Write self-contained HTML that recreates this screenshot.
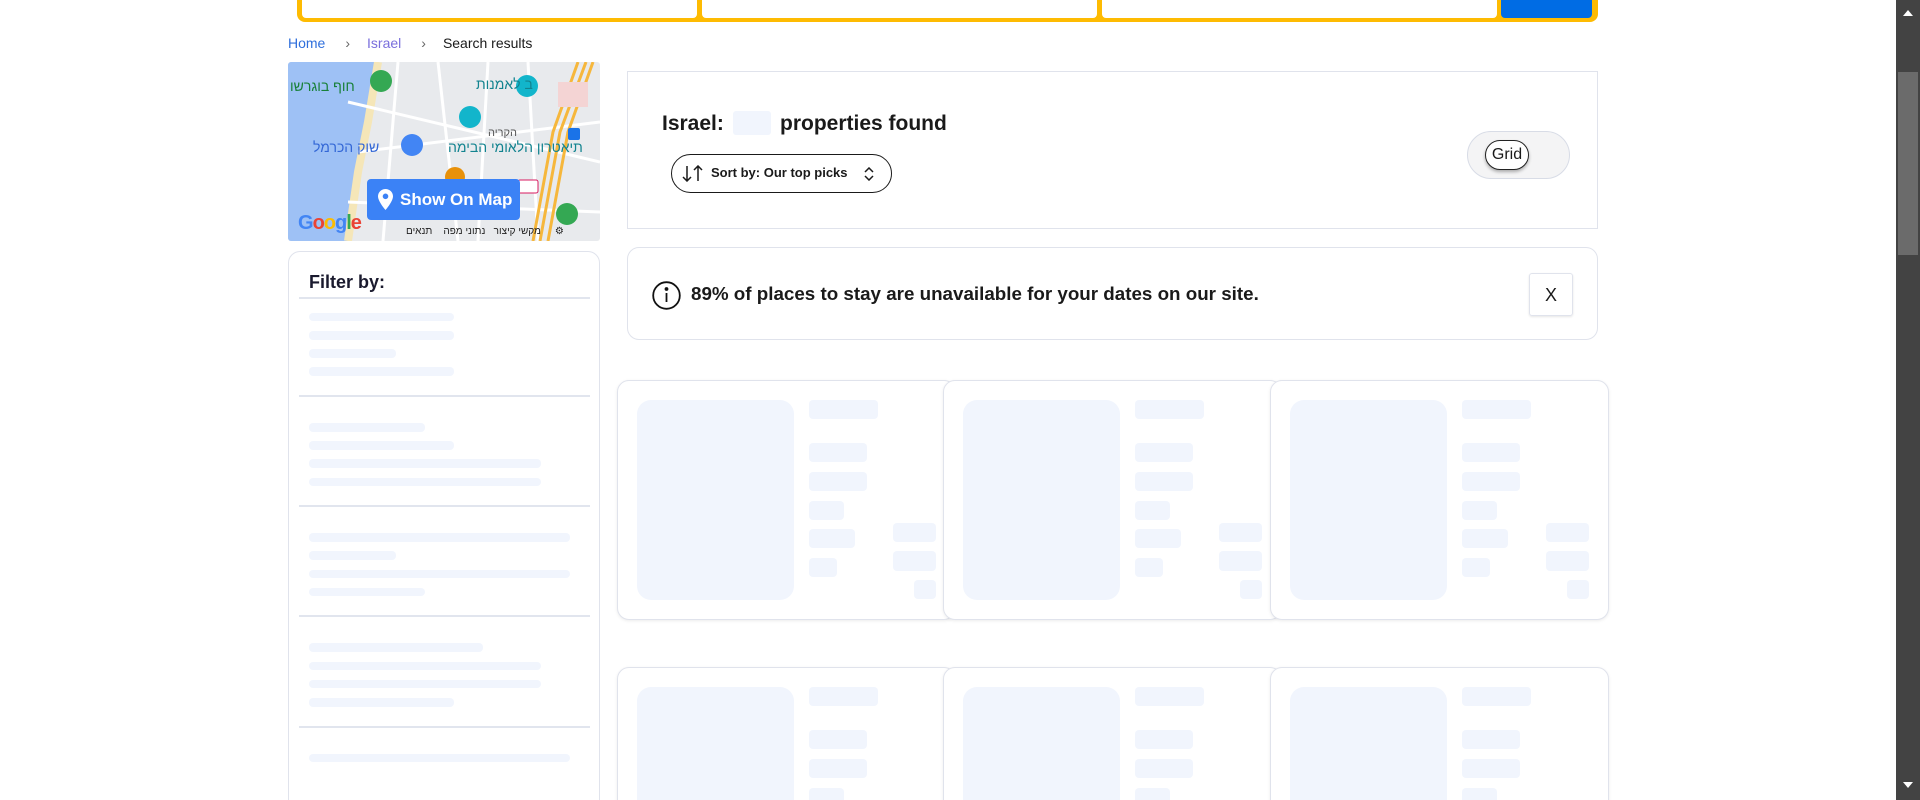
<!DOCTYPE html>
<html style="height:800px;overflow:hidden"><head><meta charset="utf-8"><style>
*{box-sizing:border-box;margin:0;padding:0}
body{width:1920px;height:800px;overflow:hidden;background:#fff;font-family:"Liberation Sans",sans-serif;color:#1a1a1a}
#wrap{position:relative;width:1920px;height:800px;overflow:hidden}
.a{position:absolute}
.sk{position:absolute;background:#f1f5fd;border-radius:4px}
.card{position:absolute;width:339px;height:240px;border:1px solid #e0e3ec;border-radius:12px;background:#fff;box-shadow:0 1px 3px rgba(0,0,0,.08)}
.div{position:absolute;left:10px;width:291px;height:2px;background:#e1e5ee}
</style></head><body><div id="wrap">
<!-- search bar -->
<div class="a" style="left:297px;top:-10px;width:1301px;height:32px;background:#febb02;border-radius:8px"></div>
<div class="a" style="left:302px;top:-10px;width:395px;height:28px;background:#fff;border-radius:4px"></div>
<div class="a" style="left:702px;top:-10px;width:395px;height:28px;background:#fff;border-radius:4px"></div>
<div class="a" style="left:1102px;top:-10px;width:395px;height:28px;background:#fff;border-radius:4px"></div>
<div class="a" style="left:1501px;top:-10px;width:91px;height:28px;background:#006ce4;border-radius:4px"></div>
<!-- breadcrumb -->
<div class="a" style="left:288px;top:35px;font-size:14px;white-space:nowrap"><span style="color:#2f6fdc">Home</span><span style="color:#666;margin:0 17px 0 20px">&#8250;</span><span style="color:#7a6fdc">Israel</span><span style="color:#666;margin:0 17px 0 20px">&#8250;</span><span>Search results</span></div>
<!-- map -->
<div class="a" style="left:288px;top:62px;width:312px;height:179px;overflow:hidden;border-radius:3px;background:#e8eaed">
<svg width="312" height="179" style="position:absolute;left:0;top:0">
<path d="M0 0H90L80 60L70 110L60 179H0Z" fill="#9ec1f5"/>
<path d="M90 0L80 60L70 110L60 179" stroke="#f5e6b8" stroke-width="8" fill="none"/>
<g stroke="#fff" stroke-width="3" fill="none"><path d="M110 0L95 179"/><path d="M150 0L170 179"/><path d="M200 0L190 179"/><path d="M60 40L312 100"/><path d="M70 90L312 60"/><path d="M60 140L312 150"/><path d="M240 0L250 179"/></g>
<g stroke="#f6b73c" stroke-width="3" fill="none"><path d="M290 0L265 70L245 179"/><path d="M298 0L272 70L252 179"/><path d="M305 0L280 70L260 179"/></g>
<rect x="270" y="20" width="30" height="25" fill="#f4d4d4"/>
<circle cx="93" cy="19" r="11" fill="#34a853"/><circle cx="239" cy="24" r="11" fill="#12b5cb"/><circle cx="182" cy="55" r="11" fill="#12b5cb"/><circle cx="124" cy="83" r="11" fill="#4285f4"/><circle cx="167" cy="115" r="10" fill="#e8910a"/><circle cx="279" cy="152" r="11" fill="#34a853"/>
<rect x="280" y="66" width="12" height="12" rx="2" fill="#1a73e8"/>
<rect x="230" y="118" width="20" height="13" rx="2" fill="#fff" stroke="#d81b60"/>
</svg>
<div class="a" style="left:2px;top:16px;font-size:14px;color:#188038;white-space:nowrap">חוף בוגרשו</div>
<div class="a" style="left:188px;top:14px;font-size:14px;color:#12838f;white-space:nowrap">ב לאמנות</div>
<div class="a" style="left:25px;top:77px;font-size:14px;color:#3367d6;white-space:nowrap">שוק הכרמל</div>
<div class="a" style="left:160px;top:77px;font-size:14px;color:#12838f;white-space:nowrap">תיאטרון הלאומי הבימה</div>
<div class="a" style="left:200px;top:65px;font-size:11px;color:#555">הקריה</div>
<div class="a" style="left:10px;top:150px;font-size:20px;font-weight:bold;letter-spacing:-1px"><span style="color:#4285f4">G</span><span style="color:#ea4335">o</span><span style="color:#fbbc05">o</span><span style="color:#4285f4">g</span><span style="color:#34a853">l</span><span style="color:#ea4335">e</span></div>
<div class="a" style="left:118px;top:164px;font-size:10px;color:#222;white-space:nowrap">מקשי קיצור &nbsp; נתוני מפה &nbsp;&nbsp; תנאים &nbsp;&nbsp;&nbsp; ⚙</div>
<div class="a" style="left:79px;top:117px;width:153px;height:41px;background:#3b82f6;border-radius:4px;color:#fff;font-weight:bold;font-size:17px;line-height:41px;padding-left:33px">Show On Map
<svg class="a" style="left:11px;top:10px" width="15" height="21" viewBox="0 0 15 21"><path d="M7.5 0C3.4 0 0 3.3 0 7.4 0 12.5 7.5 21 7.5 21S15 12.5 15 7.4C15 3.3 11.6 0 7.5 0Z" fill="#fff"/><circle cx="7.5" cy="7.3" r="2.8" fill="#3b82f6"/></svg></div>
</div>
<!-- filter -->
<div class="a" style="left:288px;top:251px;width:312px;height:570px;border:1px solid #e0e3ec;border-radius:12px;background:#fff">
<div class="a" style="left:20px;top:20px;font-size:18px;font-weight:bold;color:#1a1a2e">Filter by:</div>
<div class="div" style="top:45px"></div>
<div class="sk" style="left:20px;top:61px;width:145px;height:8px"></div>
<div class="sk" style="left:20px;top:79px;width:145px;height:9px"></div>
<div class="sk" style="left:20px;top:97px;width:87px;height:9px"></div>
<div class="sk" style="left:20px;top:115px;width:145px;height:9px"></div>
<div class="div" style="top:143px"></div>
<div class="sk" style="left:20px;top:171px;width:116px;height:9px"></div>
<div class="sk" style="left:20px;top:189px;width:145px;height:9px"></div>
<div class="sk" style="left:20px;top:207px;width:232px;height:9px"></div>
<div class="sk" style="left:20px;top:226px;width:232px;height:8px"></div>
<div class="div" style="top:253px"></div>
<div class="sk" style="left:20px;top:281px;width:261px;height:9px"></div>
<div class="sk" style="left:20px;top:299px;width:87px;height:9px"></div>
<div class="sk" style="left:20px;top:318px;width:261px;height:8px"></div>
<div class="sk" style="left:20px;top:336px;width:116px;height:8px"></div>
<div class="div" style="top:363px"></div>
<div class="sk" style="left:20px;top:391px;width:174px;height:9px"></div>
<div class="sk" style="left:20px;top:410px;width:232px;height:8px"></div>
<div class="sk" style="left:20px;top:428px;width:232px;height:8px"></div>
<div class="sk" style="left:20px;top:446px;width:145px;height:9px"></div>
<div class="div" style="top:474px"></div>
<div class="sk" style="left:20px;top:502px;width:261px;height:8px"></div>
</div>
<!-- header box -->
<div class="a" style="left:627px;top:71px;width:971px;height:158px;border:1px solid #e0e3ec;background:#fff">
<div class="a" style="left:34px;top:40px;font-size:21px;font-weight:bold;white-space:nowrap">Israel:</div>
<div class="a" style="left:105px;top:39px;width:38px;height:24px;background:#f1f5fd;border-radius:3px"></div>
<div class="a" style="left:152px;top:40px;font-size:21px;font-weight:bold;white-space:nowrap">properties found</div>
<div class="a" style="left:43px;top:82px;width:221px;height:39px;border:1.5px solid #1a1a1a;border-radius:20px;font-size:13px;font-weight:bold;line-height:36px;padding-left:39px;white-space:nowrap">Sort by: Our top picks
<svg class="a" style="left:10px;top:10px" width="22" height="17" viewBox="0 0 22 17" fill="none" stroke="#1a1a1a" stroke-width="1.5"><path d="M5 1V16M1 12L5 16L9 12"/><path d="M16 16V1M12 5L16 1L20 5"/></svg>
<svg class="a" style="left:192px;top:12px" width="10" height="14" viewBox="0 0 10 14" fill="none" stroke="#1a1a1a" stroke-width="1.5"><path d="M1 5L5 1L9 5M1 9L5 13L9 9"/></svg></div>
<div class="a" style="left:839px;top:59px;width:103px;height:48px;border:1px solid #d8dce6;border-radius:24px;background:#f4f4f5"></div>
<div class="a" style="left:857px;top:68px;width:44px;height:30px;border:1.5px solid #222;border-radius:15px;background:#fff;font-size:16px;line-height:27px;text-align:center;box-shadow:0 2px 3px rgba(0,0,0,.3)">Grid</div>
</div>
<!-- info -->
<div class="a" style="left:627px;top:247px;width:971px;height:93px;border:1px solid #e0e3ec;border-radius:12px;background:#fff">
<svg class="a" style="left:24px;top:33px" width="29" height="29" viewBox="0 0 29 29" fill="none" stroke="#111" stroke-width="1.8"><circle cx="14.5" cy="14.5" r="13.3"/><path d="M14.5 12V21"/><circle cx="14.5" cy="8" r="1" fill="#111"/></svg>
<div class="a" style="left:63px;top:35px;font-size:18.8px;font-weight:bold;white-space:nowrap">89% of places to stay are unavailable for your dates on our site.</div>
<div class="a" style="left:901px;top:25px;width:44px;height:43px;border:1px solid #e0e3ec;border-radius:3px;box-shadow:0 1px 2px rgba(0,0,0,.1);font-size:18px;text-align:center;line-height:42px">X</div>
</div>
<!-- cards -->
<div id="cards"></div>
<script>
var h='';
[380,667].forEach(function(t){[617,943,1270].forEach(function(l){
h+='<div class="card" style="left:'+l+'px;top:'+t+'px">'+
'<div class="sk" style="left:19px;top:19px;width:157px;height:200px;border-radius:14px"></div>'+
'<div class="sk" style="left:191px;top:19px;width:69px;height:19px"></div>'+
'<div class="sk" style="left:191px;top:62px;width:58px;height:19px"></div>'+
'<div class="sk" style="left:191px;top:91px;width:58px;height:19px"></div>'+
'<div class="sk" style="left:191px;top:120px;width:35px;height:19px"></div>'+
'<div class="sk" style="left:191px;top:148px;width:46px;height:19px"></div>'+
'<div class="sk" style="left:191px;top:177px;width:28px;height:19px"></div>'+
'<div class="sk" style="left:275px;top:142px;width:43px;height:19px"></div>'+
'<div class="sk" style="left:275px;top:170px;width:43px;height:20px"></div>'+
'<div class="sk" style="left:296px;top:199px;width:22px;height:19px"></div>'+
'</div>';});});
document.getElementById('cards').innerHTML=h;
</script>
<!-- scrollbar -->
<div class="a" style="left:1896px;top:0;width:24px;height:800px;background:#434343"></div>
<div class="a" style="left:1898px;top:72px;width:20px;height:183px;background:#6b6b6b"></div>
<div class="a" style="left:1903px;top:10px;width:0;height:0;border-left:5px solid transparent;border-right:5px solid transparent;border-bottom:6px solid #fff"></div>
<div class="a" style="left:1903px;top:782px;width:0;height:0;border-left:5px solid transparent;border-right:5px solid transparent;border-top:6px solid #fff"></div>
</div></body></html>
